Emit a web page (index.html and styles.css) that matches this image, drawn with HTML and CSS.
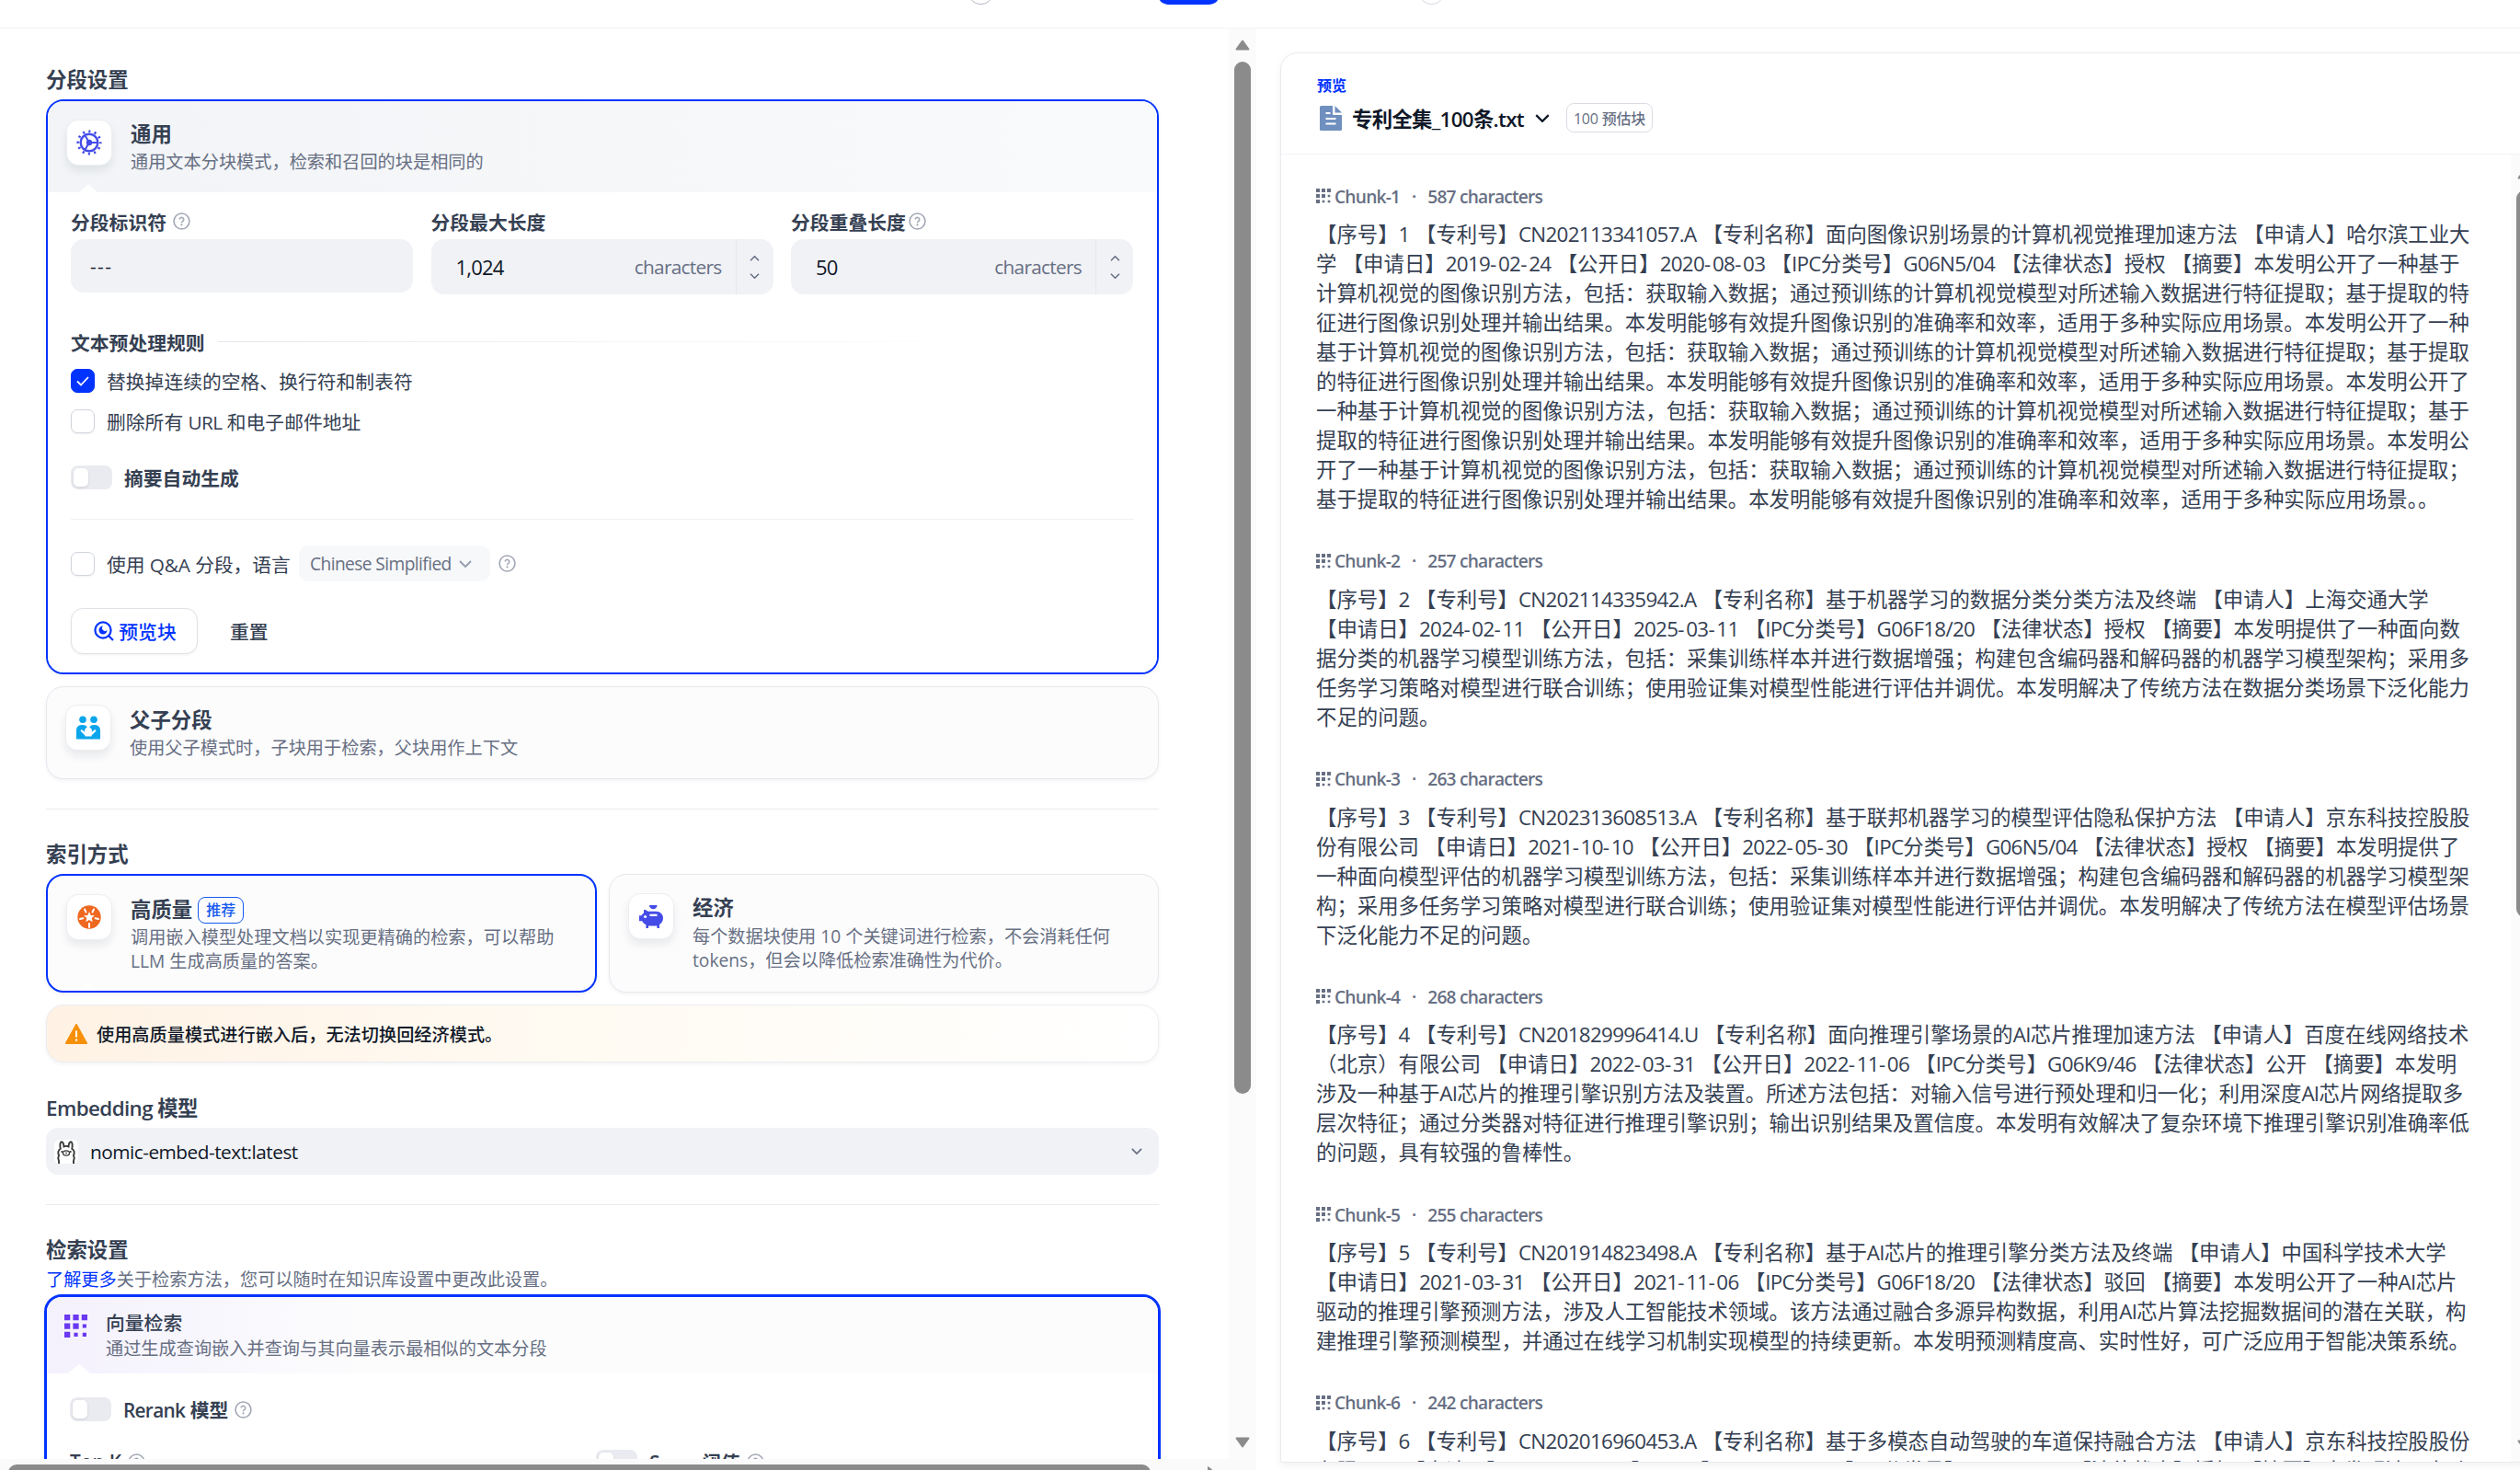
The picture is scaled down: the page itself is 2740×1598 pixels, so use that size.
FILE: index.html
```
<!DOCTYPE html>
<html lang="zh-CN">
<head>
  <meta charset="UTF-8" />
  <meta name="viewport" content="width=device-width, initial-scale=1.0"/>
  <title>分段设置</title>
  <link rel="stylesheet" href="styles.css">
</head>
<body>

  <svg class="defs" xmlns="http://www.w3.org/2000/svg">
    <symbol id="help" viewBox="0 0 18 18">
      <circle cx="9" cy="9" r="8" fill="none" stroke="currentColor" stroke-width="1.5"/>
      <path d="M6.900 7.200a2.100 2.100 0 1 1 3.300 1.700c-.8.5-1.200.8-1.200 1.700" fill="none" stroke="currentColor" stroke-width="1.500"/>
      <circle cx="9" cy="12.700" r="1" fill="currentColor"/>
    </symbol>
    <symbol id="down" viewBox="0 0 14 8">
      <path d="M1 1l6 6 6-6" fill="none" stroke="currentColor" stroke-width="2"/>
    </symbol>
    <symbol id="up" viewBox="0 0 14 8">
      <path d="M1 7l6-6 6 6" fill="none" stroke="currentColor" stroke-width="2"/>
    </symbol>
    <symbol id="grid" viewBox="0 0 24 24">
      <path d="M0 0h6v6H0zM9 0h6v6H9zM18 0h6v6h-6zM0 9h6v6H0zM9 9h6v6H9zM19 10h4v4h-4zM0 18h6v6H0zM10 19h4v4h-4zM19 19h4v4h-4z" fill="currentColor"/>
    </symbol>
  </svg>

  <div class="topbar">
    <span class="step ring"></span>
    <span class="step pill"></span>
    <span class="step ring last"></span>
  </div>

  <div class="page">
    <div class="left">
      <div class="scroll">
        <div class="settings">
          <h2>分段设置</h2>

          <div class="card active">
            <div class="card-head general">
              <div class="icon-box">
                <svg width="28" height="28" viewBox="0 0 28 28" fill="none" stroke="#444ce7">
                  <circle cx="14" cy="14" r="9.300" stroke-width="2.400"/>
                  <circle cx="14" cy="14" r="12.200" stroke-width="2.800" stroke-dasharray="2.200 4.188" stroke-dashoffset="1.100"/>
                  <path d="M14 14h9.500M14 14L9.300 5.900M14 14l-4.700 8.100" stroke-width="2"/>
                  <circle cx="14" cy="14" r="3.200" fill="#444ce7" stroke="none"/>
                </svg>
              </div>
              <div class="card-text">
                <h3>通用</h3>
                <p>通用文本分块模式，检索和召回的块是相同的</p>
              </div>
              <span class="notch"></span>
            </div>
            <div class="card-body">
              <div class="fields">
                <div class="field">
                  <label>分段标识符<svg class="help gap"><use href="#help"/></svg></label>
                  <div class="input short"><span>---</span></div>
                </div>
                <div class="field">
                  <label>分段最大长度</label>
                  <div class="input number">
                    <span class="value">1,024</span><span class="unit">characters</span>
                    <div class="spin"><svg><use href="#up"/></svg><svg><use href="#down"/></svg></div>
                  </div>
                </div>
                <div class="field">
                  <label>分段重叠长度<svg class="help"><use href="#help"/></svg></label>
                  <div class="input number">
                    <span class="value">50</span><span class="unit">characters</span>
                    <div class="spin"><svg><use href="#up"/></svg><svg><use href="#down"/></svg></div>
                  </div>
                </div>
              </div>

              <div class="rule-title"><span>文本预处理规则</span><i></i></div>
              <div class="check-row">
                <span class="checkbox checked"><svg width="14" height="11" viewBox="0 0 14 11"><path d="M1 5.500l4 4L13 1" fill="none" stroke="#fff" stroke-width="1.800"/></svg></span>
                <span>替换掉连续的空格、换行符和制表符</span>
              </div>
              <div class="check-row second">
                <span class="checkbox"></span><span>删除所有 <span class="latin">URL</span> 和电子邮件地址</span>
              </div>
              <div class="toggle-row">
                <span class="toggle"></span><b>摘要自动生成</b>
              </div>
              <div class="line"></div>
              <div class="qa-row">
                <span class="checkbox"></span><span class="qa-text">使用 Q&amp;A 分段，语言</span>
                <span class="lang">Chinese Simplified<svg><use href="#down"/></svg></span>
                <svg class="help"><use href="#help"/></svg>
              </div>
              <div class="buttons">
                <button class="preview-btn">
                  <svg width="22" height="22" viewBox="0 0 22 22" fill="none" stroke="#0033ff" stroke-width="2.200">
                    <circle cx="10" cy="10" r="8.600"/>
                    <path d="M16 16l5 5"/>
                    <path d="M10 5.500a4.500 4.500 0 1 0 4.500 4.500 2.600 2.600 0 0 1-4.500-4.500z" fill="#0033ff" stroke="none"/>
                  </svg>预览块
                </button>
                <button class="reset-btn">重置</button>
              </div>
            </div>
          </div>

          <div class="card parent">
            <div class="icon-box">
              <svg width="26" height="26" viewBox="0 0 26 26" fill="#0ba5ec">
                <circle cx="7" cy="4.200" r="3.800"/><circle cx="19" cy="4.200" r="3.800"/>
                <path d="M0 25.500V16C0 12 2.700 10 6.500 10c2.500 0 4.500.8 5.300 2.500A4.200 4.200 0 0 0 9 16.300l.3 1.400L5.700 15l-1.300 1.600 5.100 4.900v4zM26 25.500V16C26 12 23.300 10 19.500 10c-2.500 0-4.500.8-5.300 2.500a4.200 4.200 0 0 1 2.800 3.800l-.3 1.400 3.600-2.700 1.300 1.600-5.100 4.900v4z"/>
                <path d="M9 22.500h8v3H9z"/>
                <circle cx="13" cy="16.800" r="3" fill="#fff"/>
              </svg>
            </div>
            <div class="card-text">
              <h3>父子分段</h3>
              <p>使用父子模式时，子块用于检索，父块用作上下文</p>
            </div>
          </div>

          <div class="divider"></div>
          <h2 class="after-line">索引方式</h2>
          <div class="index-cards">
            <div class="card active option">
              <div class="icon-box">
                <svg width="26" height="26" viewBox="0 0 26 26">
                  <circle cx="13" cy="13" r="12.700" fill="#ef6820"/>
                  <path d="M13 7l1.700 3.900 4.200.4-3.200 2.800 1 4.100-3.700-2.200-3.700 2.200 1-4.100-3.200-2.800 4.200-.4z" fill="#fff"/>
                  <path d="M8 4.500l1.500 3M18 4.500l-1.500 3M3 15l3.300-.8M23 15l-3.300-.8M13 20v4" stroke="#fff" stroke-width="2" stroke-linecap="round"/>
                </svg>
              </div>
              <div class="card-text">
                <h3>高质量<span class="badge">推荐</span></h3>
                <p>调用嵌入模型处理文档以实现更精确的检索，可以帮助<br>LLM 生成高质量的答案。</p>
              </div>
              <span class="notch"></span>
            </div>
            <div class="card option">
              <div class="icon-box">
                <svg width="26" height="25" viewBox="0 0 26 25" fill="#444ce7">
                  <path d="M11 0h8.500c0 2.600-1.800 4.300-4.200 4.300S11 2.600 11 0z"/>
                  <path d="M5 5c2 0 3.500.6 4.300 1.700h9C23 6.700 26 10 26 14c0 3-1.500 5.500-4 7v4h-2.600v-2.500H10V25H7.400v-3.700C5.500 20.300 4 19 3.200 17.200H0v-6h2.400C3 10.200 3.900 9.300 5 8.600z"/>
                  <path d="M11.500 9.700h8V12h-8z" fill="#fff"/><circle cx="6.500" cy="12.500" r="1.600" fill="#fff"/>
                </svg>
              </div>
              <div class="card-text">
                <h3>经济</h3>
                <p>每个数据块使用 10 个关键词进行检索，不会消耗任何<br>tokens，但会以降低检索准确性为代价。</p>
              </div>
            </div>
          </div>
          <div class="warning">
            <svg width="24" height="22" viewBox="0 0 24 22">
              <path d="M12 1L23 21H1z" fill="#f79009" stroke="#f79009" stroke-width="2" stroke-linejoin="round"/>
              <path d="M12 7.500v7M12 16.500v2.200" stroke="#fff" stroke-width="2"/>
            </svg>
            使用高质量模式进行嵌入后，无法切换回经济模式。
          </div>

          <h2 class="embed-title">Embedding 模型</h2>
          <div class="model-select">
            <span class="model-logo">
              <svg width="26" height="26" viewBox="0 0 26 26" fill="none" stroke="#3a3a3a" stroke-width="1.900">
                <path d="M5 26v-3c-1-2-1-4 0-6-1.500-3-.5-6 1.700-7C6 6 6.300 2.500 7.800 2.300c1.700 0 2.500 2.500 2.700 5.200 1.500-.8 3.500-.8 5 0 .2-2.700 1-5.200 2.700-5.200 1.500.2 1.800 3.700 1.100 7.700 2.200 1 3.200 4 1.700 7 1 2 1 4 0 6v3"/>
                <ellipse cx="13" cy="14.500" rx="3.500" ry="2.600" stroke-width="1.300"/>
                <path d="M12.300 14h1.400M13 14v1.300" stroke-width="1"/>
                <circle cx="8.300" cy="13" r="1.100" fill="#3a3a3a" stroke="none"/><circle cx="17.700" cy="13" r="1.100" fill="#3a3a3a" stroke="none"/>
              </svg>
            </span>
            <span class="model-name">nomic-embed-text:latest</span>
            <svg class="arrow"><use href="#down"/></svg>
          </div>

          <div class="divider"></div>
          <h2 class="after-line">检索设置</h2>
          <p class="hint"><a>了解更多</a>关于检索方法，您可以随时在知识库设置中更改此设置。</p>
          <div class="card retrieval">
            <div class="card-head vector">
              <svg class="grid-icon"><use href="#grid"/></svg>
              <div class="card-text">
                <h4>向量检索</h4>
                <p>通过生成查询嵌入并查询与其向量表示最相似的文本分段</p>
              </div>
              <span class="notch"></span>
            </div>
            <div class="toggle-row rerank">
              <span class="toggle"></span><b><span class="latin">Rerank</span> 模型</b><svg class="help"><use href="#help"/></svg>
            </div>
            <div class="params">
              <div class="param"><b>Top K</b><svg class="help"><use href="#help"/></svg></div>
              <div class="param"><span class="toggle"></span><b><span class="latin">Score</span> 阈值</b><svg class="help"><use href="#help"/></svg></div>
            </div>
          </div>
        </div>
        <div class="vbar">
          <svg width="16" height="12" viewBox="0 0 16 12"><path d="M8 1.500L14.500 10.500h-13z"/></svg>
          <div class="vthumb"></div>
          <svg class="end" width="16" height="12" viewBox="0 0 16 12"><path d="M8 10.500L1.500 1.500h13z"/></svg>
        </div>
      </div>
      <div class="hbar">
        <div class="hthumb"></div>
        <svg width="10" height="14" viewBox="0 0 10 14"><path d="M1.500 1.500v11L8.500 7z"/></svg>
      </div>
    </div>

    <div class="preview">
      <div class="preview-head">
        <div class="preview-label">预览</div>
        <div class="file">
          <svg width="24" height="27" viewBox="0 0 24 27">
            <path d="M1.500 0H14v10h10v15.500a1.500 1.500 0 0 1-1.500 1.500h-21A1.500 1.500 0 0 1 0 25.500v-24A1.500 1.500 0 0 1 1.500 0z" fill="#6f8fbf"/>
            <path d="M16.500 0L24 7.500h-7.500z" fill="#6f8fbf"/>
            <path d="M6.500 8h5M6.500 14h11M6.500 19.500h11" stroke="#fff" stroke-width="2.200"/>
          </svg>
          <b>专利全集_100条.txt</b>
          <svg class="file-arrow"><use href="#down"/></svg>
          <span class="count">100 预估块</span>
        </div>
      </div>
      <div class="preview-body">
        <div id="chunks" class="chunks"></div>
        <div class="vbar cut">
          <svg width="16" height="12" viewBox="0 0 16 12"><path d="M8 1.500L14.500 10.500h-13z"/></svg>
          <div class="vthumb"></div>
          <svg class="end" width="16" height="12" viewBox="0 0 16 12"><path d="M8 10.500L1.500 1.500h13z"/></svg>
        </div>
      </div>
    </div>
  </div>

  <script>
    const chunks = [
      { size: 587, lines: [
        "【序号】1 【专利号】CN202113341057.A 【专利名称】面向图像识别场景的计算机视觉推理加速方法 【申请人】哈尔滨工业大",
        "学 【申请日】2019-02-24 【公开日】2020-08-03 【IPC分类号】G06N5/04 【法律状态】授权 【摘要】本发明公开了一种基于",
        "计算机视觉的图像识别方法，包括：获取输入数据；通过预训练的计算机视觉模型对所述输入数据进行特征提取；基于提取的特",
        "征进行图像识别处理并输出结果。本发明能够有效提升图像识别的准确率和效率，适用于多种实际应用场景。本发明公开了一种",
        "基于计算机视觉的图像识别方法，包括：获取输入数据；通过预训练的计算机视觉模型对所述输入数据进行特征提取；基于提取",
        "的特征进行图像识别处理并输出结果。本发明能够有效提升图像识别的准确率和效率，适用于多种实际应用场景。本发明公开了",
        "一种基于计算机视觉的图像识别方法，包括：获取输入数据；通过预训练的计算机视觉模型对所述输入数据进行特征提取；基于",
        "提取的特征进行图像识别处理并输出结果。本发明能够有效提升图像识别的准确率和效率，适用于多种实际应用场景。本发明公",
        "开了一种基于计算机视觉的图像识别方法，包括：获取输入数据；通过预训练的计算机视觉模型对所述输入数据进行特征提取；",
        "基于提取的特征进行图像识别处理并输出结果。本发明能够有效提升图像识别的准确率和效率，适用于多种实际应用场景。。"
      ]},
      { size: 257, lines: [
        "【序号】2 【专利号】CN202114335942.A 【专利名称】基于机器学习的数据分类分类方法及终端 【申请人】上海交通大学",
        "【申请日】2024-02-11 【公开日】2025-03-11 【IPC分类号】G06F18/20 【法律状态】授权 【摘要】本发明提供了一种面向数",
        "据分类的机器学习模型训练方法，包括：采集训练样本并进行数据增强；构建包含编码器和解码器的机器学习模型架构；采用多",
        "任务学习策略对模型进行联合训练；使用验证集对模型性能进行评估并调优。本发明解决了传统方法在数据分类场景下泛化能力",
        "不足的问题。"
      ]},
      { size: 263, lines: [
        "【序号】3 【专利号】CN202313608513.A 【专利名称】基于联邦机器学习的模型评估隐私保护方法 【申请人】京东科技控股股",
        "份有限公司 【申请日】2021-10-10 【公开日】2022-05-30 【IPC分类号】G06N5/04 【法律状态】授权 【摘要】本发明提供了",
        "一种面向模型评估的机器学习模型训练方法，包括：采集训练样本并进行数据增强；构建包含编码器和解码器的机器学习模型架",
        "构；采用多任务学习策略对模型进行联合训练；使用验证集对模型性能进行评估并调优。本发明解决了传统方法在模型评估场景",
        "下泛化能力不足的问题。"
      ]},
      { size: 268, lines: [
        "【序号】4 【专利号】CN201829996414.U 【专利名称】面向推理引擎场景的AI芯片推理加速方法 【申请人】百度在线网络技术",
        "（北京）有限公司 【申请日】2022-03-31 【公开日】2022-11-06 【IPC分类号】G06K9/46 【法律状态】公开 【摘要】本发明",
        "涉及一种基于AI芯片的推理引擎识别方法及装置。所述方法包括：对输入信号进行预处理和归一化；利用深度AI芯片网络提取多",
        "层次特征；通过分类器对特征进行推理引擎识别；输出识别结果及置信度。本发明有效解决了复杂环境下推理引擎识别准确率低",
        "的问题，具有较强的鲁棒性。"
      ]},
      { size: 255, lines: [
        "【序号】5 【专利号】CN201914823498.A 【专利名称】基于AI芯片的推理引擎分类方法及终端 【申请人】中国科学技术大学",
        "【申请日】2021-03-31 【公开日】2021-11-06 【IPC分类号】G06F18/20 【法律状态】驳回 【摘要】本发明公开了一种AI芯片",
        "驱动的推理引擎预测方法，涉及人工智能技术领域。该方法通过融合多源异构数据，利用AI芯片算法挖掘数据间的潜在关联，构",
        "建推理引擎预测模型，并通过在线学习机制实现模型的持续更新。本发明预测精度高、实时性好，可广泛应用于智能决策系统。"
      ]},
      { size: 242, lines: [
        "【序号】6 【专利号】CN202016960453.A 【专利名称】基于多模态自动驾驶的车道保持融合方法 【申请人】京东科技控股股份",
        "有限公司 【申请日】2020-11-20 【公开日】2021-08-13 【IPC分类号】G06V20/56 【法律状态】授权 【摘要】本发明涉及自动"
      ]}
    ];

    // latin runs get tighter tracking than the chinese around them, dashes a bit more room
    const latin = s => s
      .replace(/[A-Za-z0-9.\/]+|-/g, m => `<span class="${m === "-" ? "dash" : "latin"}">${m}</span>`);

    document.getElementById("chunks").innerHTML = chunks.map((c, i) => `
      <div class="chunk">
        <div class="chunk-head"><svg><use href="#grid"/></svg><span>Chunk-${i + 1}</span><em>·</em><span>${c.size} characters</span></div>
        <p>${c.lines.map(latin).join("<br>")}</p>
      </div>`).join("");
  </script>

</body>
</html>
```
FILE: styles.css
```
* { box-sizing: border-box; margin: 0; padding: 0; }
body {
  width: 2740px;
  height: 1598px;
  overflow: hidden;
  background: #fff;
  font-family: "Open Sans", "Noto Sans CJK SC", sans-serif;
  font-size: 20.8px;
  color: #354052;
  white-space: nowrap;
}

svg { display: block; flex: none; }
.defs { display: none; }

.topbar {
  position: relative;
  height: 31px;
  border-bottom: 1px solid #f2f3f5;
}

.step { position: absolute; bottom: 25px; height: 26px; }
.ring { left: 1053px; width: 27px; border: 1.5px solid #b5b9c4; border-radius: 13px; }
.ring.last { left: 1543px; border-color: #d5d8df; }
.pill { left: 1258px; width: 69px; background: #0033ff; border-radius: 13px; }

.page { display: flex; height: 1567px; }
.left { width: 1366px; flex: none; }
.scroll { display: flex; height: 1555px; overflow: hidden; }
.settings { width: 1336px; padding: 40px 76px 0 50px; flex: none; }

h2 {
  font-size: 22.4px;
  line-height: 32px;
  font-weight: 600;
  margin-bottom: 5px;
}
h2.after-line { margin-top: 33px; }
h3 {
  display: flex;
  align-items: center;
  font-size: 22.4px;
  line-height: 32px;
  font-weight: 600;
  margin-bottom: 1px;
}
h4 { font-size: 20.8px; line-height: 28px; font-weight: 500; }
b { font-weight: 600; }

.card {
  border: 1px solid #e6e8ee;
  border-radius: 19px;
  background: #fcfcfd;
  box-shadow: 0 2px 4px rgba(16, 24, 40, 0.05);
}
.card.active { border: 2px solid #0033ff; }
.card p, .hint { font-size: 19.2px; line-height: 26px; color: #676f83; }

.card-head { position: relative; display: flex; }
.card-head.general {
  height: 99px;
  padding: 20px 20px 0;
  border-radius: 17px 17px 0 0;
  background: linear-gradient(90deg, #f2f4f7, #f9fafb);
}
.card-body { padding: 16px 25px 20px; background: #fff; border-radius: 0 0 17px 17px; }

.icon-box {
  width: 50px;
  height: 50px;
  flex: none;
  display: flex;
  align-items: center;
  justify-content: center;
  background: #fff;
  border: 1px solid #eceef2;
  border-radius: 13px;
  box-shadow: 0 6px 10px rgba(16, 24, 40, 0.08);
}
.card-text { margin: 1px 0 0 20px; }
.general .card-text { margin-top: 0; }

.notch {
  position: absolute;
  left: 34px;
  bottom: 0;
  border: 10px solid transparent;
  border-top: 0;
  border-bottom: 9px solid #fff;
}

.fields { display: grid; grid-template-columns: repeat(3, 372px); gap: 19.5px; }
.field label { display: flex; align-items: center; height: 31px; margin-bottom: 4px; font-weight: 600; }
.help { width: 19px; height: 19px; margin-left: 3px; color: #a2a7b4; }
.help.gap { margin-left: 7px; }
.input {
  display: flex;
  align-items: center;
  height: 60px;
  background: #f1f2f6;
  border-radius: 14px;
  padding-left: 27px;
  color: #101828;
}
.input.short { height: 58px; padding-left: 21px; letter-spacing: 1.4px; }
.input .value { flex: 1; font-size: 22px; letter-spacing: -0.8px; }
.unit { color: #676f83; letter-spacing: -0.7px; }
.spin {
  height: 60px;
  width: 41px;
  margin-left: 15px;
  border-left: 1px solid #e6e8ee;
  display: flex;
  flex-direction: column;
  align-items: center;
  justify-content: center;
  gap: 13px;
  color: #676f83;
}
.spin svg { width: 11px; height: 6px; }

.rule-title { display: flex; align-items: center; height: 31px; margin-top: 36px; font-weight: 600; }
.rule-title i { flex: 1; height: 1px; margin-left: 14px; background: linear-gradient(90deg, #e6e8ee, #fff 85%); }
.check-row, .toggle-row { display: flex; align-items: center; height: 26px; margin-top: 14px; }
.check-row.second { margin-top: 18px; }
.toggle-row { margin-top: 35px; }
.checkbox {
  width: 26px;
  height: 26px;
  flex: none;
  margin-right: 13px;
  border: 1.5px solid #d0d5dc;
  border-radius: 7px;
  background: #fff;
  box-shadow: 0 1px 2px rgba(16, 24, 40, 0.06);
  display: flex;
  align-items: center;
  justify-content: center;
}
.checkbox.checked { background: #0033ff; border-color: #0033ff; }
.toggle {
  width: 45px;
  height: 26px;
  flex: none;
  margin-right: 13px;
  padding: 3px;
  border-radius: 8px;
  background: #e9ebf0;
}
.toggle::before {
  content: "";
  display: block;
  width: 16px;
  height: 20px;
  border-radius: 5px;
  background: #fff;
  box-shadow: 0 1px 3px rgba(16, 24, 40, 0.12);
}
.line { height: 1px; margin-top: 32px; background: #f0f1f4; }

.qa-row { display: flex; align-items: center; height: 39px; margin-top: 28px; }
.qa-text { width: 209px; letter-spacing: -0.1px; }
.lang {
  display: flex;
  align-items: center;
  width: 208px;
  height: 39px;
  padding-left: 12px;
  border-radius: 10px;
  background: #f7f8fa;
  color: #676f83;
  font-size: 19.2px;
  letter-spacing: -0.6px;
}
.lang svg { width: 14px; height: 8px; margin-left: 8px; color: #98a0b0; }
.qa-row .help { margin-left: 9px; }

.buttons { display: flex; margin-top: 29px; }
button {
  height: 50px;
  font-family: inherit;
  font-size: 20.8px;
  font-weight: 500;
  background: none;
  border: none;
  color: #354052;
}
.preview-btn {
  display: flex;
  align-items: center;
  justify-content: center;
  gap: 5px;
  width: 138px;
  padding-left: 2px;
  background: #fff;
  border: 1.5px solid #dfe1e6;
  border-radius: 13px;
  color: #0033ff;
  box-shadow: 0 1px 3px rgba(16, 24, 40, 0.06);
}
.reset-btn { margin-left: 35px; }

.parent { display: flex; height: 101px; margin-top: 13px; padding: 19px 20px; }
.divider { height: 1px; margin-top: 32px; background: #e9eaee; }

.index-cards { display: grid; grid-template-columns: 599px 598px; gap: 13px; }
.option { position: relative; display: flex; height: 129px; padding: 20px; }
.option .notch { border-bottom-width: 8px; }
.option:not(.active) .card-text { margin-top: 0; }
.option:not(.active) h3 { margin-bottom: 2px; }
.badge {
  display: flex;
  align-items: center;
  justify-content: center;
  width: 50px;
  height: 29px;
  margin-left: 6px;
  border: 1.5px solid #155aef;
  border-radius: 8px;
  color: #155aef;
  font-size: 16px;
  font-weight: 500;
}

.warning {
  display: flex;
  align-items: center;
  gap: 10px;
  height: 63px;
  margin-top: 13px;
  padding-left: 20px;
  border: 1px solid #ebecf0;
  border-radius: 19px;
  background: linear-gradient(90deg, #fff2e5, #fffbf3 50%, #fff);
  box-shadow: 0 2px 4px rgba(16, 24, 40, 0.05);
  color: #101828;
  font-size: 19.2px;
  font-weight: 500;
}

.embed-title { margin-top: 34px; letter-spacing: -0.6px; }
.model-select {
  display: flex;
  align-items: center;
  height: 51px;
  padding: 0 18px 0 9px;
  border-radius: 13px;
  background: #f1f2f6;
  color: #101828;
}
.model-logo { width: 26px; height: 26px; margin-right: 13px; background: #fff; border-radius: 6px; }
.model-name { flex: 1; letter-spacing: -0.5px; }
.arrow { width: 12px; height: 7px; color: #676f83; }

.hint { margin-top: -2px; }
.hint a { color: #0033ff; }
.retrieval { height: 300px; margin: 3px -2px 0; border: 3px solid #0033ff; background: #fff; }
.card-head.vector {
  height: 83px;
  padding: 15px 19px;
  border-radius: 16px 16px 0 0;
  background: linear-gradient(90deg, #f4f1fd, #fcfcfd 28%);
}
.vector .card-text { margin-top: -1px; }
.vector h4 { margin-bottom: 1px; }
.grid-icon { width: 25px; height: 25px; margin-top: 4px; color: #6938ef; }
.vector .notch { left: 23px; border-width: 0 12px 10px; }
.rerank { margin-top: 26px; padding-left: 25px; }
.rerank .help, .param .help { margin-left: 7px; }
.params { display: grid; grid-template-columns: 572px 1fr; padding-left: 25px; margin-top: 31px; }
.param { display: flex; align-items: center; height: 26px; }

/* scrollbars */
.vbar {
  width: 30px;
  height: 100%;
  display: flex;
  flex-direction: column;
  align-items: center;
  padding: 12px 0;
  background: #fbfbfb;
  fill: #8b8b8b;
  stroke: #8b8b8b;
  stroke-width: 2;
  stroke-linejoin: round;
}
.vthumb { width: 18px; height: 1122px; margin-top: 12px; background: #8b8b8b; border-radius: 9px; }
.vbar .end { margin-top: auto; }
.hbar { display: flex; height: 12px; overflow: hidden; background: #fafafa; fill: #8b8b8b; stroke: #8b8b8b; }
.hthumb { width: 1242px; height: 18px; margin: 6px 61px 0 9px; background: #8b8b8b; border-radius: 9px; }
.hbar svg { margin-top: 7px; }

/* preview panel */
.preview {
  width: 1374px;
  flex: none;
  height: 1533px;
  margin: 26px 0 0 26px;
  border: 1px solid #e9ebef;
  border-radius: 19px 0 0 0;
  background: #fff;
  box-shadow: 0 3px 8px rgba(16, 24, 40, 0.06);
  overflow: hidden;
}
.preview-head { height: 110px; padding: 24px 39px 0; border-bottom: 1px solid #f2f3f6; }
.preview-label { height: 22px; line-height: 22px; font-size: 16px; font-weight: 600; color: #0033ff; }
.file { display: flex; align-items: center; height: 32px; margin-top: 8px; padding-left: 3px; color: #101828; }
.file b { width: 188px; margin-left: 11px; font-size: 22.4px; letter-spacing: -0.7px; }
.file-arrow { width: 16px; height: 9px; margin-left: 11px; }
.count {
  display: flex;
  align-items: center;
  justify-content: center;
  width: 94px;
  height: 32px;
  margin-left: 18px;
  border: 1px solid #d9dce3;
  border-radius: 8px;
  font-size: 16px;
  font-weight: 500;
  letter-spacing: -0.2px;
  color: #676f83;
}

.preview-body { display: flex; height: 1421px; }
.chunks { width: 1337px; flex: none; padding: 29px 0 0 38px; overflow: hidden; }
.chunk { margin-bottom: 34.8px; }
.chunk-head {
  display: flex;
  align-items: center;
  height: 32px;
  margin-bottom: 10px;
  font-size: 19.2px;
  font-weight: 600;
  letter-spacing: -0.8px;
  color: #676f83;
}
.chunk-head svg { width: 16px; height: 16px; margin-right: 4px; }
.chunk-head em { font-style: normal; width: 30px; text-align: center; }
.chunk p { font-size: 22.4px; line-height: 32px; word-spacing: 0.5px; }
.latin { letter-spacing: -0.7px; }
.dash { letter-spacing: 1.7px; }
.vbar.cut { padding-top: 15px; }
.cut .vthumb { height: 790px; }
```
